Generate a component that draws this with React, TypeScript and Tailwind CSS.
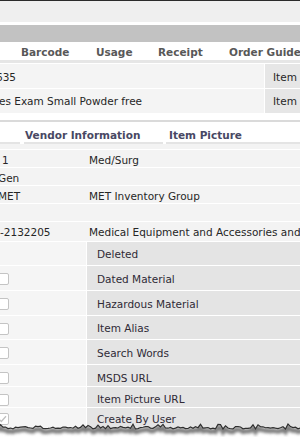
import React from "react";

function jagPoints(): [number, number][] {
  const pts: [number, number][] = [];
  let seed = 11;
  const rnd = () => {
    seed = (seed * 9301 + 49297) % 233280;
    return seed / 233280;
  };
  for (let x = -2; x <= 304; x += 2.5) {
    let y = 8.5 + rnd() * 2.5;
    if (rnd() < 0.12) y -= 2.5;
    pts.push([x, y]);
  }
  return pts;
}

function TornEdge() {
  const pts = jagPoints();
  const line = pts.map(([x, y]) => `${x},${y.toFixed(2)}`).join(" ");
  const shadow = pts.map(([x, y]) => `${x},${(y + 3).toFixed(2)}`).join(" ");
  const poly = `${line} 304,30 -2,30`;
  return (
    <svg
      className="absolute left-0 top-[418px]"
      width="300"
      height="25"
      viewBox="0 0 300 25"
    >
      <defs>
        <clipPath id="below">
          <polygon points={poly} />
        </clipPath>
        <filter id="blur" x="-10%" y="-100%" width="120%" height="300%">
          <feGaussianBlur stdDeviation="1.6" />
        </filter>
      </defs>
      <polygon points={poly} fill="#ffffff" />
      <g clipPath="url(#below)">
        <polyline
          points={shadow}
          fill="none"
          stroke="#7a7a7a"
          strokeWidth="4.5"
          filter="url(#blur)"
        />
      </g>
      <polyline points={line} fill="none" stroke="#2e2e2e" strokeWidth="1.2" />
    </svg>
  );
}

function Check({ checked }: { checked?: boolean }) {
  return (
    <div className="-ml-[4px] w-[13px] h-[12px] bg-white border border-[#c4c4c4] rounded-[2px] flex items-center justify-center">
      {checked && (
        <svg width="9" height="8" viewBox="0 0 9 8">
          <path d="M1 4.2 L3.3 6.5 L8 1.2" fill="none" stroke="#c0c0c0" strokeWidth="1.3" />
        </svg>
      )}
    </div>
  );
}

const cbRows: { label: string; h: string; pt: string; box: boolean; checked?: boolean }[] = [
  { label: "Deleted", h: "h-[24px]", pt: "pt-[2px]", box: false },
  { label: "Dated Material", h: "h-[25px]", pt: "pt-[2px]", box: true },
  { label: "Hazardous Material", h: "h-[25px]", pt: "pt-[2px]", box: true },
  { label: "Item Alias", h: "h-[24px]", pt: "pt-[2px]", box: true },
  { label: "Search Words", h: "h-[25px]", pt: "pt-[2px]", box: true },
  { label: "MSDS URL", h: "h-[22px]", pt: "pt-[5px]", box: true },
  { label: "Item Picture URL", h: "h-[21px]", pt: "pt-[5px]", box: true },
  { label: "Create By User", h: "h-[22px]", pt: "pt-[1px]", box: true, checked: true },
];

const s2Rows = [
  { l: "1", r: "Med/Surg", ml: "ml-[2px]", h: "h-[18px]" },
  { l: "Gen", r: "", ml: "-ml-[2px]", h: "h-[18px]" },
  { l: "MET", r: "MET Inventory Group", ml: "-ml-[2px]", h: "h-[18px]" },
  { l: "", r: "", ml: "", h: "h-[18px]" },
  { l: "-2132205", r: "Medical Equipment and Accessories and Supplies", ml: "ml-0", h: "h-[18px]" },
];

export default function App() {
  return (
    <div className="relative w-[300px] h-[443px] overflow-hidden bg-white font-['DejaVu_Sans',Verdana,sans-serif] text-[10.5px] leading-none text-[#262626] whitespace-nowrap">
      <div className="h-px bg-[#2b2b2b]" />
      <div className="h-[21px] bg-[#efefef]" />
      <div className="h-[3px] bg-white" />
      <div className="h-[17px] bg-[#c2c2c2]" />
      <div className="h-[18px] flex items-center pl-[21px] pt-[2px] font-bold text-[#585858]">
        <span className="w-[75px] shrink-0">Barcode</span>
        <span className="w-[62px] shrink-0">Usage</span>
        <span className="w-[71px] shrink-0">Receipt</span>
        <span className="shrink-0">Order Guide</span>
      </div>
      <div className="h-[3px] bg-[#e6e6e6]" />
      <div className="h-px bg-white" />

      <div className="flex h-[25px] bg-[#f4f4f4] border-b border-white">
        <div className="flex-1 flex items-center pt-[3px] overflow-hidden">
          <span className="-ml-[4px]">635</span>
        </div>
        <div className="w-[36px] bg-[#e6e6e6] border-l border-white flex items-center pt-[3px] pl-[8px]">
          Item
        </div>
      </div>
      <div className="flex h-[24px] bg-[#f4f4f4]">
        <div className="flex-1 flex items-center pt-[1px] overflow-hidden">
          <span className="-ml-[1px]">es Exam Small Powder free</span>
        </div>
        <div className="w-[36px] bg-[#e6e6e6] border-l border-white flex items-center pt-[1px] pl-[8px]">
          Item
        </div>
      </div>

      <div className="h-[7px] bg-white" />
      <div className="h-[2px] bg-[#dadada]" />

      <div className="h-[22px] flex font-bold text-[#484864]">
        <div className="w-[20px] shrink-0 border-b-2 border-[#e4e4e4]" />
        <div className="w-[139px] shrink-0 ml-[4px] border-b-2 border-[#e4e4e4] flex items-center pt-[6px] pl-[1px]">
          Vendor Information
        </div>
        <div className="flex-1 ml-[3px] border-b-2 border-[#e4e4e4] flex items-center pt-[6px] pl-[3px]">
          Item Picture
        </div>
      </div>

      <div className="bg-[#f3f3f3]">
        <div className="h-[5px]" />
        {s2Rows.map((row, i) => (
          <div key={i} className={`flex ${row.h} border-t border-white`}>
            <div className="w-[85px] shrink-0 flex items-center pt-[4px] overflow-hidden">
              <span className={row.ml}>{row.l}</span>
            </div>
            <div className="flex-1 flex items-center pt-[4px] pl-[4px] overflow-hidden">
              {row.r}
            </div>
          </div>
        ))}
        <div className="h-[2px]" />
      </div>

      <div>
        {cbRows.map((r, i) => (
          <div key={i} className={`flex ${r.h} border-t border-white`}>
            <div className={`w-[86px] shrink-0 bg-[#f5f5f5] flex items-center ${r.pt} overflow-hidden`}>
              {r.box && <Check checked={r.checked} />}
            </div>
            <div className={`flex-1 bg-[#e4e4e4] border-l border-white flex items-center ${r.pt} pl-[10px] text-[#2f2a36]`}>
              {r.label}
            </div>
          </div>
        ))}
      </div>

      <TornEdge />
    </div>
  );
}
